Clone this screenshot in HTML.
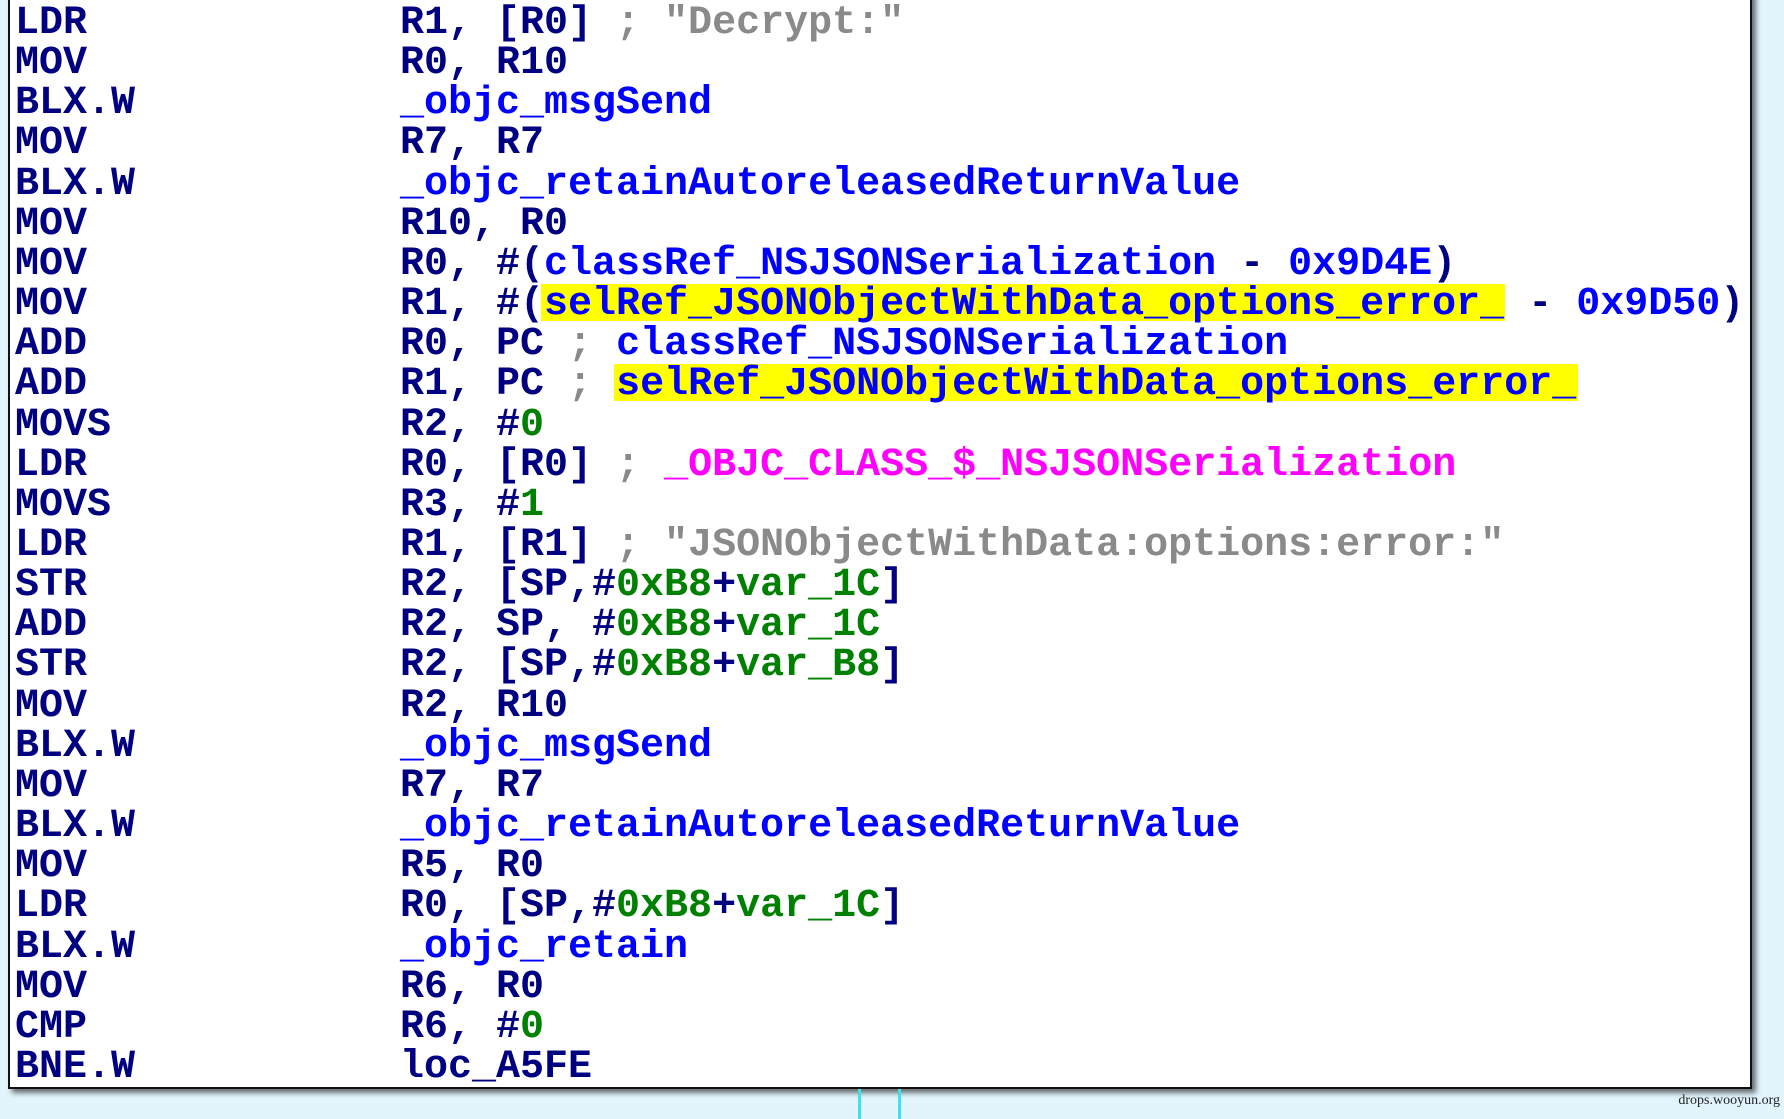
<!DOCTYPE html>
<html><head><meta charset="utf-8"><style>
html,body{margin:0;padding:0}
body{width:1784px;height:1112px;background:#e2f5fc;position:relative;overflow:hidden}
.panel{position:absolute;left:8px;top:-10px;width:1740px;height:1095px;background:#fff;border:2px solid #111;box-shadow:4px 4px 5px rgba(0,0,0,.55)}
.wrap{position:absolute;left:0;top:4px;width:1784px;height:1100px}
.r{position:absolute;left:0;height:40px;line-height:40px;font-family:"Liberation Mono",monospace;font-weight:bold;font-size:40px;white-space:pre;color:#000080}
.m{position:absolute;left:15px}
.o{position:absolute;left:400px}
.b{color:#0000ff}.g{color:#8a8a8a}.n{color:#008000}.p{color:#ff00ff}
.hl{position:absolute;background:#ffff00}
.vl{position:absolute;top:1089px;width:3px;height:30px;background:#3fe3f0}
.wm{position:absolute;right:4px;top:1093px;font-family:"Liberation Serif",serif;font-size:14px;color:#222;white-space:nowrap}
</style></head><body>
<div class="panel"></div>
<div class="hl" style="left:541px;top:284px;width:964px;height:37px"></div>
<div class="hl" style="left:614px;top:364px;width:964px;height:37px"></div>
<div class="wrap">
<div class="r" style="top:0px"><span class="m">LDR</span><span class="o">R1, [R0] <span class="g">; "Decrypt:"</span></span></div>
<div class="r" style="top:40px"><span class="m">MOV</span><span class="o">R0, R10</span></div>
<div class="r" style="top:80px"><span class="m">BLX.W</span><span class="o b">_objc_msgSend</span></div>
<div class="r" style="top:120px"><span class="m">MOV</span><span class="o">R7, R7</span></div>
<div class="r" style="top:161px"><span class="m">BLX.W</span><span class="o b">_objc_retainAutoreleasedReturnValue</span></div>
<div class="r" style="top:201px"><span class="m">MOV</span><span class="o">R10, R0</span></div>
<div class="r" style="top:241px"><span class="m">MOV</span><span class="o">R0, #(<span class="b">classRef_NSJSONSerialization</span> - <span class="b">0x9D4E</span>)</span></div>
<div class="r" style="top:281px"><span class="m">MOV</span><span class="o">R1, #(<span class="b">selRef_JSONObjectWithData_options_error_</span> - <span class="b">0x9D50</span>)</span></div>
<div class="r" style="top:321px"><span class="m">ADD</span><span class="o">R0, PC <span class="g">;</span> <span class="b">classRef_NSJSONSerialization</span></span></div>
<div class="r" style="top:361px"><span class="m">ADD</span><span class="o">R1, PC <span class="g">;</span> <span class="b">selRef_JSONObjectWithData_options_error_</span></span></div>
<div class="r" style="top:402px"><span class="m">MOVS</span><span class="o">R2, #<span class="n">0</span></span></div>
<div class="r" style="top:442px"><span class="m">LDR</span><span class="o">R0, [R0] <span class="g">;</span> <span class="p">_OBJC_CLASS_$_NSJSONSerialization</span></span></div>
<div class="r" style="top:482px"><span class="m">MOVS</span><span class="o">R3, #<span class="n">1</span></span></div>
<div class="r" style="top:522px"><span class="m">LDR</span><span class="o">R1, [R1] <span class="g">; "JSONObjectWithData:options:error:"</span></span></div>
<div class="r" style="top:562px"><span class="m">STR</span><span class="o">R2, [SP,#<span class="n">0xB8</span>+<span class="n">var_1C</span>]</span></div>
<div class="r" style="top:602px"><span class="m">ADD</span><span class="o">R2, SP, #<span class="n">0xB8</span>+<span class="n">var_1C</span></span></div>
<div class="r" style="top:642px"><span class="m">STR</span><span class="o">R2, [SP,#<span class="n">0xB8</span>+<span class="n">var_B8</span>]</span></div>
<div class="r" style="top:683px"><span class="m">MOV</span><span class="o">R2, R10</span></div>
<div class="r" style="top:723px"><span class="m">BLX.W</span><span class="o b">_objc_msgSend</span></div>
<div class="r" style="top:763px"><span class="m">MOV</span><span class="o">R7, R7</span></div>
<div class="r" style="top:803px"><span class="m">BLX.W</span><span class="o b">_objc_retainAutoreleasedReturnValue</span></div>
<div class="r" style="top:843px"><span class="m">MOV</span><span class="o">R5, R0</span></div>
<div class="r" style="top:883px"><span class="m">LDR</span><span class="o">R0, [SP,#<span class="n">0xB8</span>+<span class="n">var_1C</span>]</span></div>
<div class="r" style="top:924px"><span class="m">BLX.W</span><span class="o b">_objc_retain</span></div>
<div class="r" style="top:964px"><span class="m">MOV</span><span class="o">R6, R0</span></div>
<div class="r" style="top:1004px"><span class="m">CMP</span><span class="o">R6, #<span class="n">0</span></span></div>
<div class="r" style="top:1044px"><span class="m">BNE.W</span><span class="o">loc_A5FE</span></div>
</div>
<div class="vl" style="left:858px"></div>
<div class="vl" style="left:898px"></div>
<div class="wm">drops.wooyun.org</div>
</body></html>
